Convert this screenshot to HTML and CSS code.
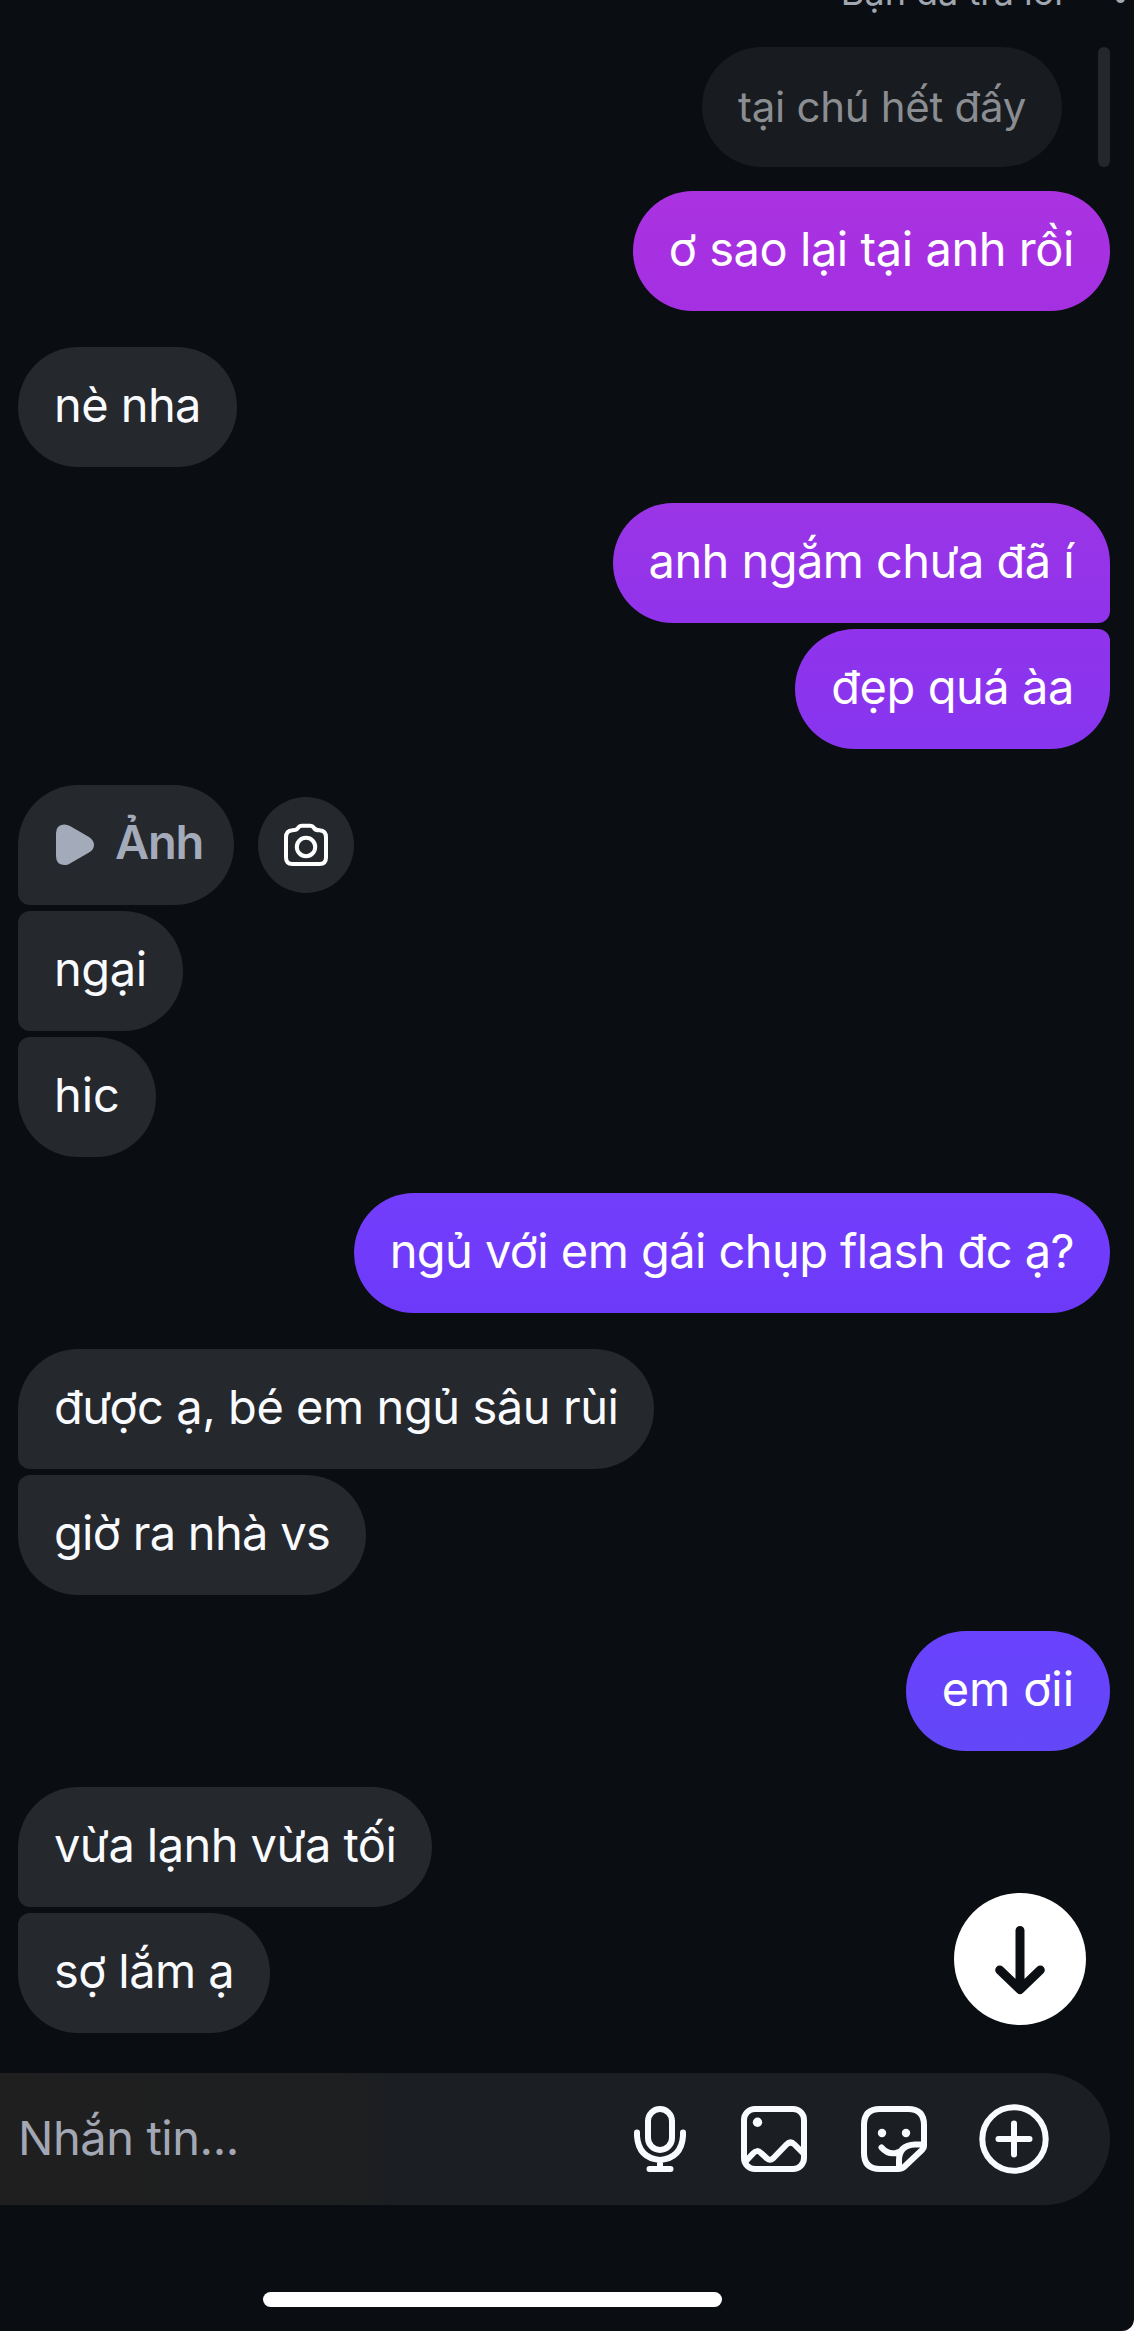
FILE: index.html
```html
<!DOCTYPE html>
<html lang="vi">
<head>
<meta charset="utf-8">
<title>Tin nhắn</title>
<link rel="stylesheet" href="styles.css">
</head>
<body>
<main class="screen">
  <header class="reply-label"><span>Bạn đã trả lời</span><i class="reply-dot"></i></header>
  <section class="thread">
    <div class="row sent quote"><div class="bubble quoted"><span class="t">tại chú hết đấy</span></div><div class="quote-bar"></div></div>
    <div class="row sent"><div class="bubble tone1"><span class="t">ơ sao lại tại anh rồi</span></div></div>
    <div class="row"><div class="bubble"><span class="t tight">nè nha</span></div></div>
    <div class="group sent">
      <div class="bubble first tone2"><span class="t tight">anh ngắm chưa đã í</span></div>
      <div class="bubble last tone3"><span class="t">đẹp quá àa</span></div>
    </div>
    <div class="group">
      <div class="photo-row">
        <div class="bubble first photo">
          <svg class="play" viewBox="0 0 38 42"><path d="M0 9Q0 1 8 .5Q11 .4 14 2L33 13Q38 16.500 38 21Q38 25.500 33 28.500L14 39.500Q11 41.500 8 41Q0 40.500 0 32Z" fill="#a3abba"/></svg>
          <span class="t">Ảnh</span>
        </div>
        <button class="camera" aria-label="Máy ảnh"><svg viewBox="0 0 48 48" width="48" height="48" fill="none" stroke="#fff" stroke-width="4"><path d="M4 36.500V16.500q0-7 6.500-7.200q4 0 5.500-2.300q1.500-2.200 4-2.200h8q2.500 0 4 2.200q1.500 2.300 5.500 2.300q6.500 .2 6.500 7.200v20q0 6.500-6.500 6.500h-27q-6.500 0-6.500-6.500z"/><circle cx="24" cy="26" r="9.200"/></svg></button>
      </div>
      <div class="bubble middle"><span class="t">ngại</span></div>
      <div class="bubble last"><span class="t loose">hic</span></div>
    </div>
    <div class="row sent"><div class="bubble tone4"><span class="t tight">ngủ với em gái chụp flash đc ạ?</span></div></div>
    <div class="group">
      <div class="bubble first"><span class="t">được ạ, bé em ngủ sâu rùi</span></div>
      <div class="bubble last"><span class="t tighter">giờ ra nhà vs</span></div>
    </div>
    <div class="row sent"><div class="bubble tone5"><span class="t loose">em ơii</span></div></div>
    <div class="group">
      <div class="bubble first"><span class="t tight">vừa lạnh vừa tối</span></div>
      <div class="bubble last"><span class="t tight">sợ lắm ạ</span></div>
    </div>
    <button class="jump" aria-label="Xuống cuối"><svg width="66" height="72" viewBox="0 0 66 72" fill="none" stroke="#0b0e12" stroke-width="9" stroke-linecap="round" stroke-linejoin="round"><path d="M33 7.500V66M12.700 47L33 66.500L53.300 47"/></svg></button>
  </section>
  <footer class="composer">
    <span class="t placeholder">Nhắn tin...</span>
    <div class="tools">
      <svg class="mic" viewBox="0 0 72 72"><rect x="24" y="6" width="24" height="41" rx="12"/><path d="M13 29.500V33Q14.500 55 36 57Q57.500 55 59 33V29.500M36 57v8M25.500 66h21"/></svg>
      <svg viewBox="0 0 72 72"><rect x="6" y="6" width="60" height="60" rx="11"/><path d="M7 59L15 50.500Q19 46 23 50L29 55.500Q32 58 35 55.500L48.500 41.500Q52.500 37.500 56.500 41.500L65 50"/><circle class="dot" cx="19.500" cy="19.300" r="4.700"/></svg>
      <svg viewBox="0 0 72 72"><path d="M40 66H22Q6 66 6 50V22Q6 6 22 6H50Q66 6 66 22V43Q66 45 64.500 46.500L45.500 64.500Q44 66 40 66ZM41 65V57.500Q41 42 57 41.500H65M23.500 44.500Q29.500 51.500 38 50Q42 49 45 46"/><circle class="dot" cx="24" cy="30" r="4.200"/><circle class="dot" cx="48" cy="30" r="4.200"/></svg>
      <svg viewBox="0 0 72 72"><circle cx="36" cy="36" r="31.700"/><path d="M36 20.500v31M20.500 36h31"/></svg>
    </div>
  </footer>
  <div class="home"></div>
</main>
</body>
</html>
```
FILE: styles.css
```css
*{box-sizing:border-box}
body{margin:0;background:#fff;font-family:Inter,"Noto Sans",sans-serif}
button{border:0;padding:0;display:grid;place-items:center}
.screen{height:2331px;background:#0a0d11;border-radius:0 0 12px 0;display:flex;flex-direction:column;overflow:hidden}
.reply-label{height:13px;flex:none;margin-bottom:34px;display:flex;justify-content:flex-end;align-items:flex-end;gap:53px;padding-right:9px;font-size:36px;line-height:42px;color:#a0a7b1}
.reply-dot{width:9px;height:9px;border-radius:50%;background:#a0a7b1;margin-bottom:10px}
.thread{position:relative;display:flex;flex-direction:column;gap:36px;padding:0 24px 0 18px}
.row{display:flex}
.row.sent{justify-content:flex-end}
.group{display:flex;flex-direction:column;align-items:flex-start;gap:6px}
.group.sent{align-items:flex-end}
.bubble{height:120px;border-radius:60px;background:#25282d;color:#f9fbff;padding:0 36px;display:flex;align-items:center;white-space:nowrap;font-size:47px;line-height:116px}
.t{display:block;height:120px;letter-spacing:-.44px}
.tight{letter-spacing:-.57px}
.tighter{letter-spacing:-.7px}
.loose{letter-spacing:-.05px}
.bubble.first{border-bottom-left-radius:12px}
.bubble.middle{border-top-left-radius:12px;border-bottom-left-radius:12px}
.bubble.last{border-top-left-radius:12px}
.sent .bubble{color:#fff}
.sent .first{border-radius:60px 60px 12px 60px}
.sent .last{border-radius:60px 12px 60px 60px}
.quote{gap:36px;margin-bottom:-12px}
.sent .quoted{background:#181b1f;color:#8a8d91;font-size:42px;line-height:119px}
.quoted .t{letter-spacing:-.28px}
.quote-bar{width:12px;height:120px;border-radius:6px;background:#24272b}
.tone1{background:linear-gradient(#aa32e1,#a430e2)}
.tone2{background:linear-gradient(#9b35e6,#9033eb)}
.tone3{background:linear-gradient(#9033ec,#8735ef)}
.tone4{background:linear-gradient(#743dfc,#6d3af9)}
.tone5{background:linear-gradient(#6942fd,#6347f8)}
.photo-row{display:flex;align-items:center;gap:24px}
.photo{padding:0 31px 0 38px;gap:21px;color:#a3abba;font-weight:600;line-height:114px}
.photo .t{letter-spacing:-1.2px}
.play{width:38px;height:42px}
.camera{width:96px;height:96px;border-radius:50%;background:#25282d}
.jump{position:absolute;right:48px;bottom:8px;width:132px;height:132px;border-radius:50%;background:#fff}
.composer{flex:none;height:132px;width:1110px;margin-top:40px;border-radius:0 66px 66px 0;background:linear-gradient(90deg,#1f1f20,#1e1f20 340px,#1b1e22 400px);display:flex;align-items:center;justify-content:space-between;padding:0 60px 0 18px;color:#a3a7b4;font-size:47px;line-height:118px}
.tools{display:flex;gap:48px}
.tools svg{width:72px;height:72px;fill:none;stroke:#f9fbff;stroke-width:6;stroke-linecap:round;stroke-linejoin:round}
.tools .mic{margin-right:-6px}
.tools .dot{fill:#f9fbff;stroke:none}
.home{width:459px;height:15px;border-radius:8px;background:#fff;margin:87px 0 0 263px}
```
